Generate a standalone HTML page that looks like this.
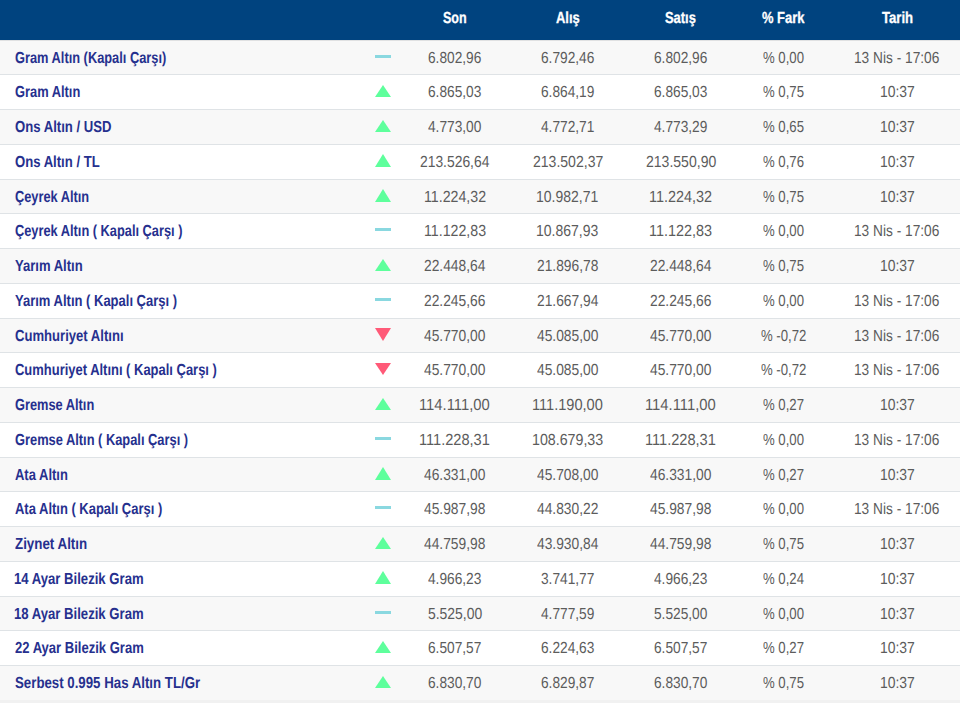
<!DOCTYPE html>
<html><head><meta charset="utf-8"><style>
html,body{margin:0;padding:0;}
body{width:960px;height:703px;overflow:hidden;background:#f1f1f1;font-family:"Liberation Sans",sans-serif;position:relative;}
div,i,b,s,span{position:absolute;display:block;}
.hd{left:0;top:0;width:960px;height:40px;background:#00437f;}
.r{left:0;width:960px;}
.o{background:#f8f8f8}.e{background:#fff}
.ln{left:0;width:960px;height:1px;background:#dfe3e6;}
.t{white-space:nowrap;line-height:20px;height:20px;transform-origin:0 0;text-rendering:geometricPrecision;}
.h{color:#fff;font-weight:bold;font-size:16px;-webkit-text-stroke:0.3px #fff;}
.n{font-weight:bold;color:#26308e;font-size:16px;}
.v{color:#5c5c5c;font-size:16px;}
.up{left:375px;width:0;height:0;border-left:8px solid transparent;border-right:8px solid transparent;border-bottom:12px solid #5eff9c;}
.dn{left:375px;width:0;height:0;border-left:8px solid transparent;border-right:8px solid transparent;border-top:13px solid #ff5a78;}
.fl{left:375px;width:16px;height:3px;background:#8ad8e0;}
</style></head><body>

<div class="hd"></div>
<span class="t h" style="left:442.900px;top:9px;transform:scaleX(0.7833)">Son</span>
<span class="t h" style="left:555.547px;top:9px;transform:scaleX(0.8103)">Alış</span>
<span class="t h" style="left:665.048px;top:9px;transform:scaleX(0.8079)">Satış</span>
<span class="t h" style="left:762.151px;top:9px;transform:scaleX(0.8075)">% Fark</span>
<span class="t h" style="left:882.121px;top:9px;transform:scaleX(0.8211)">Tarih</span>
<div class="r o" style="top:40px;height:34px"></div>
<div class="ln" style="top:74px"></div>
<span class="t n" style="left:15.300px;top:49px;transform:scaleX(0.8011)">Gram Altın (Kapalı Çarşı)</span>
<i class="fl" style="top:55px"></i>
<span class="t v" style="left:428.450px;top:49px;transform:scaleX(0.8565)">6.802,96</span>
<span class="t v" style="left:540.882px;top:49px;transform:scaleX(0.8565)">6.792,46</span>
<span class="t v" style="left:653.882px;top:49px;transform:scaleX(0.8565)">6.802,96</span>
<span class="t v" style="left:762.792px;top:49px;transform:scaleX(0.8225)">% 0,00</span>
<span class="t v" style="left:854.478px;top:49px;transform:scaleX(0.8566)">13 Nis - 17:06</span>
<div class="r e" style="top:75px;height:34px"></div>
<div class="ln" style="top:109px"></div>
<span class="t n" style="left:15.300px;top:83px;transform:scaleX(0.8037)">Gram Altın</span>
<i class="up" style="top:85px;border-bottom-width:12px"></i>
<span class="t v" style="left:428.450px;top:83px;transform:scaleX(0.8565)">6.865,03</span>
<span class="t v" style="left:540.882px;top:83px;transform:scaleX(0.8565)">6.864,19</span>
<span class="t v" style="left:653.882px;top:83px;transform:scaleX(0.8565)">6.865,03</span>
<span class="t v" style="left:762.792px;top:83px;transform:scaleX(0.8225)">% 0,75</span>
<span class="t v" style="left:879.920px;top:83px;transform:scaleX(0.8692)">10:37</span>
<div class="r o" style="top:110px;height:34px"></div>
<div class="ln" style="top:144px"></div>
<span class="t n" style="left:15.300px;top:118px;transform:scaleX(0.8201)">Ons Altın / USD</span>
<i class="up" style="top:120px;border-bottom-width:12px"></i>
<span class="t v" style="left:428.450px;top:118px;transform:scaleX(0.8565)">4.773,00</span>
<span class="t v" style="left:540.882px;top:118px;transform:scaleX(0.8565)">4.772,71</span>
<span class="t v" style="left:653.882px;top:118px;transform:scaleX(0.8565)">4.773,29</span>
<span class="t v" style="left:762.792px;top:118px;transform:scaleX(0.8225)">% 0,65</span>
<span class="t v" style="left:879.920px;top:118px;transform:scaleX(0.8692)">10:37</span>
<div class="r e" style="top:145px;height:34px"></div>
<div class="ln" style="top:179px"></div>
<span class="t n" style="left:15.300px;top:153px;transform:scaleX(0.8192)">Ons Altın / TL</span>
<i class="up" style="top:154px;border-bottom-width:13px"></i>
<span class="t v" style="left:420.350px;top:153px;transform:scaleX(0.8662)">213.526,64</span>
<span class="t v" style="left:532.776px;top:153px;transform:scaleX(0.8772)">213.502,37</span>
<span class="t v" style="left:645.776px;top:153px;transform:scaleX(0.8772)">213.550,90</span>
<span class="t v" style="left:762.792px;top:153px;transform:scaleX(0.8225)">% 0,76</span>
<span class="t v" style="left:879.920px;top:153px;transform:scaleX(0.8692)">10:37</span>
<div class="r o" style="top:180px;height:33px"></div>
<div class="ln" style="top:213px"></div>
<span class="t n" style="left:15.300px;top:188px;transform:scaleX(0.7984)">Çeyrek Altın</span>
<i class="up" style="top:189px;border-bottom-width:13px"></i>
<span class="t v" style="left:423.513px;top:188px;transform:scaleX(0.8870)">11.224,32</span>
<span class="t v" style="left:535.953px;top:188px;transform:scaleX(0.8743)">10.982,71</span>
<span class="t v" style="left:648.919px;top:188px;transform:scaleX(0.9000)">11.224,32</span>
<span class="t v" style="left:762.792px;top:188px;transform:scaleX(0.8225)">% 0,75</span>
<span class="t v" style="left:879.920px;top:188px;transform:scaleX(0.8692)">10:37</span>
<div class="r e" style="top:214px;height:34px"></div>
<div class="ln" style="top:248px"></div>
<span class="t n" style="left:15.300px;top:222px;transform:scaleX(0.8000)">Çeyrek Altın ( Kapalı Çarşı )</span>
<i class="fl" style="top:228px"></i>
<span class="t v" style="left:423.513px;top:222px;transform:scaleX(0.8870)">11.122,83</span>
<span class="t v" style="left:535.953px;top:222px;transform:scaleX(0.8743)">10.867,93</span>
<span class="t v" style="left:648.919px;top:222px;transform:scaleX(0.9000)">11.122,83</span>
<span class="t v" style="left:762.792px;top:222px;transform:scaleX(0.8225)">% 0,00</span>
<span class="t v" style="left:854.478px;top:222px;transform:scaleX(0.8566)">13 Nis - 17:06</span>
<div class="r o" style="top:249px;height:34px"></div>
<div class="ln" style="top:283px"></div>
<span class="t n" style="left:15.300px;top:257px;transform:scaleX(0.8157)">Yarım Altın</span>
<i class="up" style="top:259px;border-bottom-width:12px"></i>
<span class="t v" style="left:424.400px;top:257px;transform:scaleX(0.8620)">22.448,64</span>
<span class="t v" style="left:536.831px;top:257px;transform:scaleX(0.8620)">21.896,78</span>
<span class="t v" style="left:649.831px;top:257px;transform:scaleX(0.8620)">22.448,64</span>
<span class="t v" style="left:762.792px;top:257px;transform:scaleX(0.8225)">% 0,75</span>
<span class="t v" style="left:879.920px;top:257px;transform:scaleX(0.8692)">10:37</span>
<div class="r e" style="top:284px;height:34px"></div>
<div class="ln" style="top:318px"></div>
<span class="t n" style="left:15.300px;top:292px;transform:scaleX(0.8126)">Yarım Altın ( Kapalı Çarşı )</span>
<i class="fl" style="top:298px"></i>
<span class="t v" style="left:424.400px;top:292px;transform:scaleX(0.8620)">22.245,66</span>
<span class="t v" style="left:536.831px;top:292px;transform:scaleX(0.8620)">21.667,94</span>
<span class="t v" style="left:649.831px;top:292px;transform:scaleX(0.8620)">22.245,66</span>
<span class="t v" style="left:762.792px;top:292px;transform:scaleX(0.8225)">% 0,00</span>
<span class="t v" style="left:854.478px;top:292px;transform:scaleX(0.8566)">13 Nis - 17:06</span>
<div class="r o" style="top:319px;height:33px"></div>
<div class="ln" style="top:352px"></div>
<span class="t n" style="left:15.300px;top:327px;transform:scaleX(0.8178)">Cumhuriyet Altını</span>
<i class="dn" style="top:328px;border-top-width:13px"></i>
<span class="t v" style="left:424.400px;top:327px;transform:scaleX(0.8620)">45.770,00</span>
<span class="t v" style="left:536.831px;top:327px;transform:scaleX(0.8620)">45.085,00</span>
<span class="t v" style="left:649.831px;top:327px;transform:scaleX(0.8620)">45.770,00</span>
<span class="t v" style="left:760.735px;top:327px;transform:scaleX(0.8225)">% -0,72</span>
<span class="t v" style="left:854.478px;top:327px;transform:scaleX(0.8566)">13 Nis - 17:06</span>
<div class="r e" style="top:353px;height:34px"></div>
<div class="ln" style="top:387px"></div>
<span class="t n" style="left:15.300px;top:361px;transform:scaleX(0.8100)">Cumhuriyet Altını ( Kapalı Çarşı )</span>
<i class="dn" style="top:363px;border-top-width:12px"></i>
<span class="t v" style="left:424.400px;top:361px;transform:scaleX(0.8620)">45.770,00</span>
<span class="t v" style="left:536.831px;top:361px;transform:scaleX(0.8620)">45.085,00</span>
<span class="t v" style="left:649.831px;top:361px;transform:scaleX(0.8620)">45.770,00</span>
<span class="t v" style="left:760.735px;top:361px;transform:scaleX(0.8225)">% -0,72</span>
<span class="t v" style="left:854.478px;top:361px;transform:scaleX(0.8566)">13 Nis - 17:06</span>
<div class="r o" style="top:388px;height:34px"></div>
<div class="ln" style="top:422px"></div>
<span class="t n" style="left:15.300px;top:396px;transform:scaleX(0.8000)">Gremse Altın</span>
<i class="up" style="top:398px;border-bottom-width:12px"></i>
<span class="t v" style="left:419.426px;top:396px;transform:scaleX(0.9240)">114.111,00</span>
<span class="t v" style="left:531.853px;top:396px;transform:scaleX(0.9118)">111.190,00</span>
<span class="t v" style="left:644.837px;top:396px;transform:scaleX(0.9240)">114.111,00</span>
<span class="t v" style="left:762.792px;top:396px;transform:scaleX(0.8225)">% 0,27</span>
<span class="t v" style="left:879.920px;top:396px;transform:scaleX(0.8692)">10:37</span>
<div class="r e" style="top:423px;height:34px"></div>
<div class="ln" style="top:457px"></div>
<span class="t n" style="left:15.300px;top:431px;transform:scaleX(0.8033)">Gremse Altın ( Kapalı Çarşı )</span>
<i class="fl" style="top:437px"></i>
<span class="t v" style="left:419.438px;top:431px;transform:scaleX(0.9118)">111.228,31</span>
<span class="t v" style="left:531.884px;top:431px;transform:scaleX(0.8885)">108.679,33</span>
<span class="t v" style="left:644.853px;top:431px;transform:scaleX(0.9118)">111.228,31</span>
<span class="t v" style="left:762.792px;top:431px;transform:scaleX(0.8225)">% 0,00</span>
<span class="t v" style="left:854.478px;top:431px;transform:scaleX(0.8566)">13 Nis - 17:06</span>
<div class="r o" style="top:458px;height:33px"></div>
<div class="ln" style="top:491px"></div>
<span class="t n" style="left:15.300px;top:466px;transform:scaleX(0.8108)">Ata Altın</span>
<i class="up" style="top:467px;border-bottom-width:13px"></i>
<span class="t v" style="left:424.400px;top:466px;transform:scaleX(0.8620)">46.331,00</span>
<span class="t v" style="left:536.831px;top:466px;transform:scaleX(0.8620)">45.708,00</span>
<span class="t v" style="left:649.831px;top:466px;transform:scaleX(0.8620)">46.331,00</span>
<span class="t v" style="left:762.792px;top:466px;transform:scaleX(0.8225)">% 0,27</span>
<span class="t v" style="left:879.920px;top:466px;transform:scaleX(0.8692)">10:37</span>
<div class="r e" style="top:492px;height:34px"></div>
<div class="ln" style="top:526px"></div>
<span class="t n" style="left:15.300px;top:500px;transform:scaleX(0.8105)">Ata Altın ( Kapalı Çarşı )</span>
<i class="fl" style="top:506px"></i>
<span class="t v" style="left:424.400px;top:500px;transform:scaleX(0.8620)">45.987,98</span>
<span class="t v" style="left:536.831px;top:500px;transform:scaleX(0.8620)">44.830,22</span>
<span class="t v" style="left:649.831px;top:500px;transform:scaleX(0.8620)">45.987,98</span>
<span class="t v" style="left:762.792px;top:500px;transform:scaleX(0.8225)">% 0,00</span>
<span class="t v" style="left:854.478px;top:500px;transform:scaleX(0.8566)">13 Nis - 17:06</span>
<div class="r o" style="top:527px;height:34px"></div>
<div class="ln" style="top:561px"></div>
<span class="t n" style="left:15.300px;top:535px;transform:scaleX(0.8337)">Ziynet Altın</span>
<i class="up" style="top:537px;border-bottom-width:12px"></i>
<span class="t v" style="left:424.400px;top:535px;transform:scaleX(0.8620)">44.759,98</span>
<span class="t v" style="left:536.831px;top:535px;transform:scaleX(0.8620)">43.930,84</span>
<span class="t v" style="left:649.831px;top:535px;transform:scaleX(0.8620)">44.759,98</span>
<span class="t v" style="left:762.792px;top:535px;transform:scaleX(0.8225)">% 0,75</span>
<span class="t v" style="left:879.920px;top:535px;transform:scaleX(0.8692)">10:37</span>
<div class="r e" style="top:562px;height:34px"></div>
<div class="ln" style="top:596px"></div>
<span class="t n" style="left:14.480px;top:570px;transform:scaleX(0.8202)">14 Ayar Bilezik Gram</span>
<i class="up" style="top:571px;border-bottom-width:13px"></i>
<span class="t v" style="left:428.450px;top:570px;transform:scaleX(0.8565)">4.966,23</span>
<span class="t v" style="left:540.882px;top:570px;transform:scaleX(0.8565)">3.741,77</span>
<span class="t v" style="left:653.882px;top:570px;transform:scaleX(0.8565)">4.966,23</span>
<span class="t v" style="left:762.792px;top:570px;transform:scaleX(0.8225)">% 0,24</span>
<span class="t v" style="left:879.920px;top:570px;transform:scaleX(0.8692)">10:37</span>
<div class="r o" style="top:597px;height:33px"></div>
<div class="ln" style="top:630px"></div>
<span class="t n" style="left:14.480px;top:605px;transform:scaleX(0.8202)">18 Ayar Bilezik Gram</span>
<i class="fl" style="top:611px"></i>
<span class="t v" style="left:427.580px;top:605px;transform:scaleX(0.8705)">5.525,00</span>
<span class="t v" style="left:540.882px;top:605px;transform:scaleX(0.8565)">4.777,59</span>
<span class="t v" style="left:653.882px;top:605px;transform:scaleX(0.8565)">5.525,00</span>
<span class="t v" style="left:762.792px;top:605px;transform:scaleX(0.8225)">% 0,00</span>
<span class="t v" style="left:879.920px;top:605px;transform:scaleX(0.8692)">10:37</span>
<div class="r e" style="top:631px;height:34px"></div>
<div class="ln" style="top:665px"></div>
<span class="t n" style="left:15.300px;top:639px;transform:scaleX(0.8150)">22 Ayar Bilezik Gram</span>
<i class="up" style="top:641px;border-bottom-width:12px"></i>
<span class="t v" style="left:428.450px;top:639px;transform:scaleX(0.8565)">6.507,57</span>
<span class="t v" style="left:540.882px;top:639px;transform:scaleX(0.8565)">6.224,63</span>
<span class="t v" style="left:653.882px;top:639px;transform:scaleX(0.8565)">6.507,57</span>
<span class="t v" style="left:762.792px;top:639px;transform:scaleX(0.8225)">% 0,27</span>
<span class="t v" style="left:879.920px;top:639px;transform:scaleX(0.8692)">10:37</span>
<div class="r o" style="top:666px;height:34px"></div>
<span class="t n" style="left:15.300px;top:674px;transform:scaleX(0.8286)">Serbest 0.995 Has Altın TL/Gr</span>
<i class="up" style="top:676px;border-bottom-width:12px"></i>
<span class="t v" style="left:428.450px;top:674px;transform:scaleX(0.8565)">6.830,70</span>
<span class="t v" style="left:540.882px;top:674px;transform:scaleX(0.8565)">6.829,87</span>
<span class="t v" style="left:653.882px;top:674px;transform:scaleX(0.8565)">6.830,70</span>
<span class="t v" style="left:762.792px;top:674px;transform:scaleX(0.8225)">% 0,75</span>
<span class="t v" style="left:879.920px;top:674px;transform:scaleX(0.8692)">10:37</span>
<div class="ln" style="top:40px;background:#e0e1e2"></div>
</body></html>
